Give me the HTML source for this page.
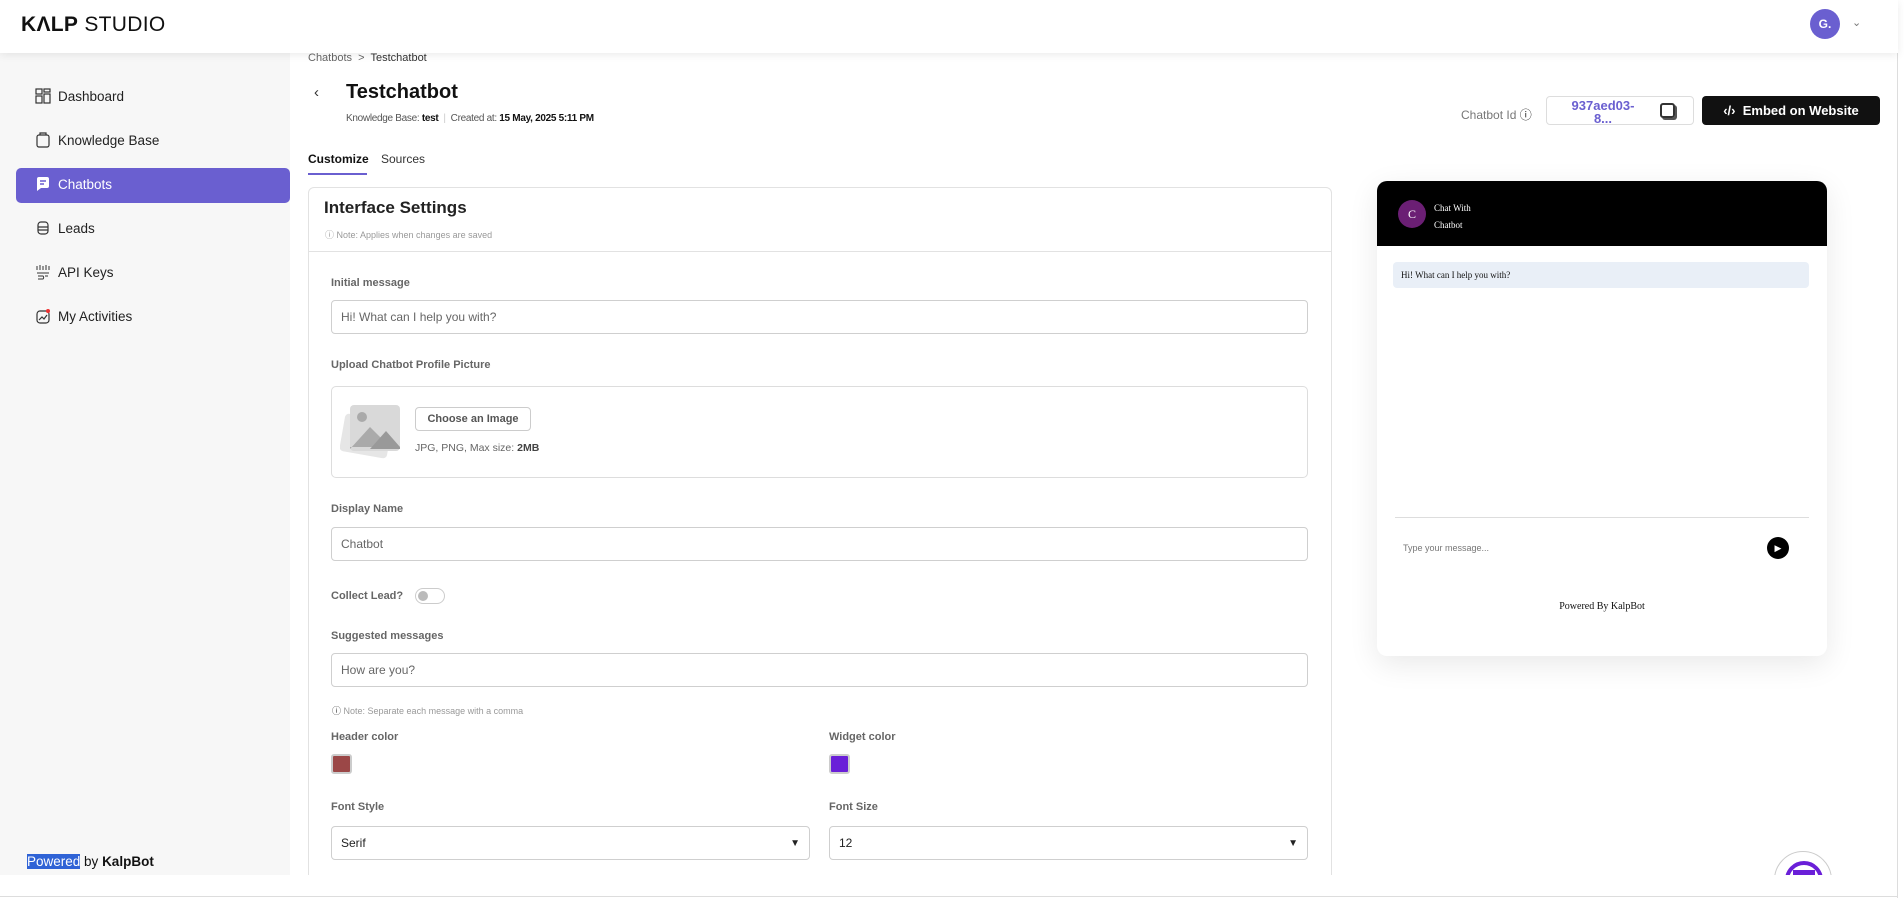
<!DOCTYPE html>
<html style="overflow:hidden;height:898px"><head><meta charset="utf-8"><style>
*{box-sizing:border-box;margin:0;padding:0}
body{width:1904px;height:898px;overflow:hidden;background:#fff;font-family:"Liberation Sans",Arial,sans-serif;color:#111;position:relative}
.a{position:absolute}
.hdr{left:0;top:0;width:1898px;height:53px;background:#fff;box-shadow:0 2px 8px rgba(0,0,0,.08);z-index:5}
.side{left:0;top:53px;width:290px;height:822px;background:#f7f7f7}
.nav{left:35px;font-size:13.5px;color:#222;display:flex;align-items:center;gap:7px}
.lbl{font-size:11px;font-weight:bold;color:#666;left:331px}
.inp{left:331px;width:977px;height:34px;border:1px solid #cfcfcf;border-radius:4px;font-size:12px;color:#666;padding:0 9px;display:flex;align-items:center}
</style></head><body>
<div class="a hdr">
 <div class="a" style="left:21px;top:13px;font-size:21px;letter-spacing:0.3px"><b>KΛLP</b> STUDIO</div>
 <div class="a" style="left:1810px;top:9px;width:30px;height:30px;border-radius:50%;background:#6a5fd0;color:#fff;font-size:12px;font-weight:bold;display:flex;align-items:center;justify-content:center">G.</div>
 <div class="a" style="left:1852px;top:16px;font-size:11px;color:#777">⌄</div>
</div>
<div class="a" style="left:1897px;top:53px;width:1px;height:845px;background:#ddd"></div>
<div class="a side"></div>
<div class="a nav" style="top:88px"><svg width="16" height="16" viewBox="0 0 16 16" fill="none" stroke="#333" stroke-width="1.2"><rect x="1" y="1" width="6" height="5"/><rect x="9" y="1" width="6" height="3"/><rect x="1" y="8" width="6" height="7"/><rect x="9" y="6" width="6" height="9"/></svg>Dashboard</div>
<div class="a nav" style="top:132px"><svg width="16" height="16" viewBox="0 0 16 16" fill="none" stroke="#333" stroke-width="1.2"><rect x="2" y="3" width="12" height="12" rx="2"/><path d="M5 3V1h6v2"/></svg>Knowledge Base</div>
<div class="a" style="left:16px;top:168px;width:274px;height:35px;background:#6a5fd0;border-radius:5px"></div>
<div class="a nav" style="top:176px;color:#fff"><svg width="16" height="16" viewBox="0 0 16 16"><path d="M2 3a2 2 0 0 1 2-2h8a2 2 0 0 1 2 2v7a2 2 0 0 1-2 2H6l-4 3z" fill="#fff"/><path d="M5 5h6M5 8h4" stroke="#6a5fd0" stroke-width="1.4"/></svg>Chatbots</div>
<div class="a nav" style="top:220px"><svg width="16" height="16" viewBox="0 0 16 16" fill="none" stroke="#333" stroke-width="1.2"><rect x="3" y="2" width="10" height="12" rx="3"/><path d="M3 7h10M3 10h10"/></svg>Leads</div>
<div class="a nav" style="top:264px"><svg width="16" height="16" viewBox="0 0 16 16" fill="none" stroke="#333" stroke-width="1"><path d="M2 2v4M5 1v5M8 2v4M11 1v5M14 2v4M2 9h12M3 12h5a2 2 0 0 1 0 3H3M10 12h3"/></svg>API Keys</div>
<div class="a nav" style="top:308px"><svg width="16" height="16" viewBox="0 0 16 16" fill="none" stroke="#333" stroke-width="1.2"><rect x="2" y="3" width="12" height="12" rx="3"/><path d="M4 12l3-3 2 2 3-4"/><circle cx="13" cy="3" r="2" fill="#e33" stroke="none"/></svg>My Activities</div>
<div class="a" style="left:27px;top:854px;font-size:13.5px"><span style="background:#2f63d6;color:#fff">Powered</span> by <b>KalpBot</b></div>

<div class="a" style="left:308px;top:52px;font-size:11px;color:#666">Chatbots &nbsp;&gt;&nbsp; <span style="color:#333">Testchatbot</span></div>
<div class="a" style="left:314px;top:84px;font-size:15px;color:#333">‹</div>
<div class="a" style="left:346px;top:81px;font-size:20px;font-weight:bold">Testchatbot</div>
<div class="a" style="left:346px;top:113px;font-size:10px;color:#555;letter-spacing:-0.3px">Knowledge Base: <b style="color:#111">test</b> &nbsp;<span style="color:#ccc">|</span>&nbsp; Created at: <b style="color:#111">15 May, 2025 5:11 PM</b></div>
<div class="a" style="left:308px;top:152px;font-size:12px;font-weight:bold;color:#111">Customize</div>
<div class="a" style="left:381px;top:152px;font-size:12px;color:#333">Sources</div>
<div class="a" style="left:308px;top:173px;width:59px;height:2px;background:#6a5fd0"></div>

<div class="a" style="left:308px;top:187px;width:1024px;height:700px;border:1px solid #e2e2e2;border-radius:6px"></div>
<div class="a" style="left:324px;top:198px;font-size:17px;font-weight:bold;color:#222">Interface Settings</div>
<div class="a" style="left:325px;top:228px;font-size:9px;color:#999">ⓘ Note: Applies when changes are saved</div>
<div class="a" style="left:309px;top:251px;width:1022px;height:1px;background:#e2e2e2"></div>

<div class="a lbl" style="top:277px">Initial message</div>
<div class="a inp" style="top:300px">Hi! What can I help you with?</div>
<div class="a lbl" style="top:359px">Upload Chatbot Profile Picture</div>
<div class="a" style="left:331px;top:386px;width:977px;height:92px;border:1px solid #ddd;border-radius:5px"></div>
<svg class="a" style="left:340px;top:403px" width="62" height="58" viewBox="0 0 62 58"><rect x="2" y="14" width="48" height="38" rx="4" fill="#e6e6e6" transform="rotate(10 26 33)"/><rect x="10" y="2" width="50" height="46" rx="4" fill="#d9d9d9"/><circle cx="22" cy="14" r="5" fill="#aaa"/><path d="M10 46l20-22 20 20H10z" fill="#aaa"/><path d="M30 46l16-18 14 16v2z" fill="#999"/></svg>
<div class="a" style="left:415px;top:407px;width:116px;height:24px;border:1px solid #ccc;border-radius:4px;font-size:11px;font-weight:bold;color:#555;display:flex;align-items:center;justify-content:center">Choose an Image</div>
<div class="a" style="left:415px;top:442px;font-size:10.5px;color:#666">JPG, PNG, Max size: <b style="color:#444">2MB</b></div>
<div class="a lbl" style="top:503px">Display Name</div>
<div class="a inp" style="top:527px">Chatbot</div>
<div class="a lbl" style="top:590px">Collect Lead?</div>
<div class="a" style="left:415px;top:588px;width:30px;height:16px;border:1px solid #ccc;border-radius:8px"><div style="position:absolute;left:2px;top:2px;width:10px;height:10px;border-radius:50%;background:#bbb"></div></div>
<div class="a lbl" style="top:630px">Suggested messages</div>
<div class="a inp" style="top:653px">How are you?</div>
<div class="a" style="left:332px;top:704px;font-size:9px;color:#999"><span style="color:#333">ⓘ</span> Note: Separate each message with a comma</div>
<div class="a lbl" style="top:731px">Header color</div>
<div class="a lbl" style="top:731px;left:829px">Widget color</div>
<div class="a" style="left:331px;top:754px;width:21px;height:20px;border:2px solid #ccc;border-radius:3px;background:#9b4747"></div>
<div class="a" style="left:829px;top:754px;width:21px;height:20px;border:2px solid #ccc;border-radius:3px;background:#6a1fd8"></div>
<div class="a lbl" style="top:801px">Font Style</div>
<div class="a lbl" style="top:801px;left:829px">Font Size</div>
<div class="a inp" style="top:826px;width:479px;color:#222;justify-content:space-between">Serif<span style="font-size:10px">▼</span></div>
<div class="a inp" style="top:826px;left:829px;width:479px;color:#222;justify-content:space-between">12<span style="font-size:10px">▼</span></div>

<div class="a" style="left:1461px;top:106px;font-size:12px;color:#777">Chatbot Id <span style="color:#222">ⓘ</span></div>
<div class="a" style="left:1546px;top:96px;width:148px;height:29px;border:1px solid #ddd;border-radius:4px"></div>
<div class="a" style="left:1563px;top:99px;width:80px;font-size:13px;font-weight:bold;color:#6a5fd0;text-align:center;line-height:13px">937aed03-<br>8...</div>
<div class="a" style="left:1660px;top:103px;width:15px;height:15px;border:2px solid #333;border-radius:3px;box-shadow:2px 2px 0 #555"></div>
<div class="a" style="left:1702px;top:96px;width:178px;height:29px;background:#111;border-radius:4px;color:#fff;font-size:13px;font-weight:bold;display:flex;align-items:center;justify-content:center">‹/› &nbsp;Embed on Website</div>

<div class="a" style="left:1377px;top:181px;width:450px;height:475px;border-radius:10px;background:#fff;box-shadow:0 8px 30px rgba(0,0,0,.09);overflow:hidden;font-family:'Liberation Serif',serif">
 <div style="height:65px;background:#000;position:relative">
  <div class="a" style="left:21px;top:19px;width:28px;height:28px;border-radius:50%;background:#6b1f74;color:#fff;font-size:12px;display:flex;align-items:center;justify-content:center">C</div>
  <div class="a" style="left:57px;top:19px;color:#fff;font-size:9px;line-height:17px">Chat With<br>Chatbot</div>
 </div>
 <div class="a" style="left:16px;top:81px;width:416px;height:26px;background:#e9eff7;border-radius:4px;font-size:9px;padding-left:8px;display:flex;align-items:center">Hi! What can I help you with?</div>
 <div class="a" style="left:18px;top:336px;width:414px;height:1px;background:#ddd"></div>
 <div class="a" style="left:26px;top:362px;font-size:9px;color:#777;font-family:'Liberation Sans',sans-serif">Type your message...</div>
 <div class="a" style="left:390px;top:356px;width:22px;height:22px;border-radius:50%;background:#000;color:#fff;font-size:9px;display:flex;align-items:center;justify-content:center">▶</div>
 <div class="a" style="left:0;top:420px;width:450px;text-align:center;font-size:10px">Powered By KalpBot</div>
</div>
<div class="a" style="left:1774px;top:851px;width:58px;height:24px;overflow:hidden"><div style="width:58px;height:58px;border-radius:50%;border:1px solid #ccc;position:relative"><div style="position:absolute;left:10px;top:9px;width:38px;height:38px;border-radius:50%;border:4px solid #6a1fd8"></div><div style="position:absolute;left:18px;top:18px;width:22px;height:10px;background:#6a1fd8"></div></div></div>
<div class="a" style="left:0;top:875px;width:1897px;height:21px;background:#fff"></div>
<div class="a" style="left:0;top:896px;width:1898px;height:1px;background:#ddd"></div>
</body></html>
